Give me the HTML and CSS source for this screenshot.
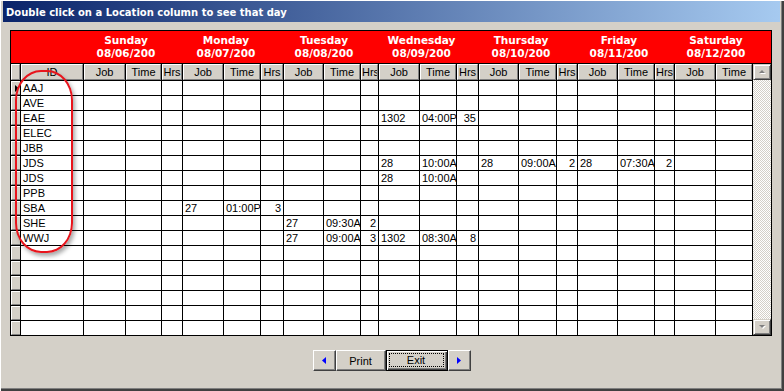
FILE: index.html
```html
<!DOCTYPE html>
<html>
<head>
<meta charset="utf-8">
<link rel="stylesheet" href="styles.css">
</head>
<body>
<div class="window">
  <div class="titlebar"><span class="title">Double click on a Location column to see that day</span></div>
  <div class="client">
    <div class="grid">
      <div class="days">
        <div class="days-lead"></div>
        <div class="day d-sun">Sunday<br>08/06/200</div>
        <div class="day d-mon">Monday<br>08/07/200</div>
        <div class="day d-tue">Tuesday<br>08/08/200</div>
        <div class="day d-wed">Wednesday<br>08/09/200</div>
        <div class="day d-thu">Thursday<br>08/10/200</div>
        <div class="day d-fri">Friday<br>08/11/200</div>
        <div class="day d-sat">Saturday<br>08/12/200</div>
      </div>
      <div class="grid-body">
        <div class="rows">
          <div class="row head"><span class="sel"></span><span>ID</span><span>Job</span><span>Time</span><span>Hrs</span><span>Job</span><span>Time</span><span>Hrs</span><span>Job</span><span>Time</span><span>Hrs</span><span>Job</span><span>Time</span><span>Hrs</span><span>Job</span><span>Time</span><span>Hrs</span><span>Job</span><span>Time</span><span>Hrs</span><span>Job</span><span>Time</span></div>
          <div class="row"><span class="sel"><svg class="ptr" width="4" height="7" viewBox="0 0 4 7"><path d="M0 0L4 3.5L0 7Z" fill="#000"/></svg></span><span>AAJ</span><span></span><span></span><span></span><span></span><span></span><span></span><span></span><span></span><span></span><span></span><span></span><span></span><span></span><span></span><span></span><span></span><span></span><span></span><span></span><span></span></div>
          <div class="row"><span class="sel"></span><span>AVE</span><span></span><span></span><span></span><span></span><span></span><span></span><span></span><span></span><span></span><span></span><span></span><span></span><span></span><span></span><span></span><span></span><span></span><span></span><span></span><span></span></div>
          <div class="row"><span class="sel"></span><span>EAE</span><span></span><span></span><span></span><span></span><span></span><span></span><span></span><span></span><span></span><span>1302</span><span class="tm">04:00P</span><span class="hrs">35</span><span></span><span></span><span></span><span></span><span></span><span></span><span></span><span></span></div>
          <div class="row"><span class="sel"></span><span>ELEC</span><span></span><span></span><span></span><span></span><span></span><span></span><span></span><span></span><span></span><span></span><span></span><span></span><span></span><span></span><span></span><span></span><span></span><span></span><span></span><span></span></div>
          <div class="row"><span class="sel"></span><span>JBB</span><span></span><span></span><span></span><span></span><span></span><span></span><span></span><span></span><span></span><span></span><span></span><span></span><span></span><span></span><span></span><span></span><span></span><span></span><span></span><span></span></div>
          <div class="row"><span class="sel"></span><span>JDS</span><span></span><span></span><span></span><span></span><span></span><span></span><span></span><span></span><span></span><span>28</span><span class="tm">10:00A</span><span class="hrs"></span><span>28</span><span class="tm">09:00A</span><span class="hrs">2</span><span>28</span><span class="tm">07:30A</span><span class="hrs">2</span><span></span><span></span></div>
          <div class="row"><span class="sel"></span><span>JDS</span><span></span><span></span><span></span><span></span><span></span><span></span><span></span><span></span><span></span><span>28</span><span class="tm">10:00A</span><span></span><span></span><span></span><span></span><span></span><span></span><span></span><span></span><span></span></div>
          <div class="row"><span class="sel"></span><span>PPB</span><span></span><span></span><span></span><span></span><span></span><span></span><span></span><span></span><span></span><span></span><span></span><span></span><span></span><span></span><span></span><span></span><span></span><span></span><span></span><span></span></div>
          <div class="row"><span class="sel"></span><span>SBA</span><span></span><span></span><span></span><span>27</span><span class="tm">01:00P</span><span class="hrs">3</span><span></span><span></span><span></span><span></span><span></span><span></span><span></span><span></span><span></span><span></span><span></span><span></span><span></span><span></span></div>
          <div class="row"><span class="sel"></span><span>SHE</span><span></span><span></span><span></span><span></span><span></span><span></span><span>27</span><span class="tm">09:30A</span><span class="hrs">2</span><span></span><span></span><span></span><span></span><span></span><span></span><span></span><span></span><span></span><span></span><span></span></div>
          <div class="row"><span class="sel"></span><span>WWJ</span><span></span><span></span><span></span><span></span><span></span><span></span><span>27</span><span class="tm">09:00A</span><span class="hrs">3</span><span>1302</span><span class="tm">08:30A</span><span class="hrs">8</span><span></span><span></span><span></span><span></span><span></span><span></span><span></span><span></span></div>
          <div class="row"><span class="sel"></span><span></span><span></span><span></span><span></span><span></span><span></span><span></span><span></span><span></span><span></span><span></span><span></span><span></span><span></span><span></span><span></span><span></span><span></span><span></span><span></span><span></span></div>
          <div class="row"><span class="sel"></span><span></span><span></span><span></span><span></span><span></span><span></span><span></span><span></span><span></span><span></span><span></span><span></span><span></span><span></span><span></span><span></span><span></span><span></span><span></span><span></span><span></span></div>
          <div class="row"><span class="sel"></span><span></span><span></span><span></span><span></span><span></span><span></span><span></span><span></span><span></span><span></span><span></span><span></span><span></span><span></span><span></span><span></span><span></span><span></span><span></span><span></span><span></span></div>
          <div class="row"><span class="sel"></span><span></span><span></span><span></span><span></span><span></span><span></span><span></span><span></span><span></span><span></span><span></span><span></span><span></span><span></span><span></span><span></span><span></span><span></span><span></span><span></span><span></span></div>
          <div class="row"><span class="sel"></span><span></span><span></span><span></span><span></span><span></span><span></span><span></span><span></span><span></span><span></span><span></span><span></span><span></span><span></span><span></span><span></span><span></span><span></span><span></span><span></span><span></span></div>
          <div class="row"><span class="sel"></span><span></span><span></span><span></span><span></span><span></span><span></span><span></span><span></span><span></span><span></span><span></span><span></span><span></span><span></span><span></span><span></span><span></span><span></span><span></span><span></span><span></span></div>
        </div>
        <div class="vscroll">
          <div class="sb-btn"><svg width="9" height="6" viewBox="0 0 9 6"><path d="M2 5L5 2L8 5Z" fill="#fff"/><path d="M1 4L4 1L7 4Z" fill="#808080"/></svg></div>
          <div class="sb-track"></div>
          <div class="sb-btn"><svg width="9" height="6" viewBox="0 0 9 6"><path d="M2 2L5 5L8 2Z" fill="#fff"/><path d="M1 1L4 4L7 1Z" fill="#808080"/></svg></div>
        </div>
      </div>
    </div>
    <div class="buttons">
      <button class="btn btn-arrow"><svg width="4" height="7" viewBox="0 0 4 7"><path d="M4 0L0 3.5L4 7Z" fill="#0000ff"/></svg></button>
      <button class="btn btn-print">Print</button>
      <button class="btn btn-exit"><span class="focus">Exit</span></button>
      <button class="btn btn-arrow"><svg width="4" height="7" viewBox="0 0 4 7"><path d="M0 0L4 3.5L0 7Z" fill="#0000ff"/></svg></button>
    </div>
  </div>
  <div class="annot"></div>
</div>
</body>
</html>
```
FILE: styles.css
```css
* { box-sizing: border-box; }
html, body { margin: 0; padding: 0; }
body {
  background: #d4d0c8;
  font-family: "Liberation Sans", Arial, sans-serif;
  font-size: 11px;
  color: #000;
}
.window {
  position: relative;
  width: 784px;
  height: 391px;
  background: #d4d0c8;
  padding: 1px 4px 0 3px;
  box-shadow: inset 1px 1px 0 #ffffff, inset -1px -1px 0 #404040, inset -2px -2px 0 #404040, inset -3px -3px 0 #808080;
}
.titlebar {
  height: 21px;
  background: linear-gradient(to right, #0a246a, #a6caf0);
  padding: 4px 0 0 3px;
}
.title {
  display: block;
  font-family: "DejaVu Sans", Verdana, sans-serif;
  font-weight: bold;
  font-size: 10px;
  line-height: 16px;
  color: #fff;
  white-space: nowrap;
}
.client {
  padding: 8px 0 0 7px;
}
.grid {
  width: 762px;
  height: 306px;
  border: 1px solid #000;
  background: #d4d0c8;
}
.days {
  display: flex;
  height: 33px;
  background: #ff0000;
  border-bottom: 1px solid #000;
  color: #fff;
  font-family: "DejaVu Sans", Verdana, sans-serif;
  font-weight: bold;
  font-size: 10.5px;
  line-height: 13px;
}
.days-lead { width: 72px; flex: none; }
.day {
  flex: none;
  text-align: center;
  padding: 3px 13px 0 0;
  white-space: nowrap;
}
.d-sun { width: 99px; }
.d-mon { width: 101px; }
.d-tue { width: 95px; }
.d-wed { width: 100px; }
.d-thu { width: 99px; }
.d-fri { width: 97px; }
.d-sat { width: 97px; }
.grid-body {
  display: flex;
  height: 271px;
}
.rows {
  width: 742px;
  flex: none;
  display: flex;
  flex-direction: column;
  gap: 1px;
  background: #000;
  padding-right: 1px;
}
.row {
  display: grid;
  grid-template-columns: 9px 62px 41px 35px 20px 40px 36px 22px 39px 36px 17px 40px 36px 21px 39px 37px 20px 39px 36px 19px 40px 36px;
  column-gap: 1px;
  height: 14px;
  line-height: 14px;
}
.row > span {
  background: #fff;
  padding: 0 2px;
  overflow: hidden;
  white-space: nowrap;
}
.row > span.tm { padding: 0 0 0 2px; }
.row > span.hrs { text-align: right; }
.row > span.sel {
  background: #d4d0c8;
  padding: 0;
  border-top: 1px solid #fff;
  border-left: 1px solid #fff;
  border-bottom: 1px solid #808080;
  display: flex;
  align-items: center;
  justify-content: center;
}
.ptr { display: block; margin-left: 2px; }
.row.head { height: 16px; line-height: 14px; }
.row.head > span {
  background: #d4d0c8;
  text-align: center;
  border-top: 1px solid #fff;
  border-left: 1px solid #fff;
  border-bottom: 1px solid #808080;
  border-right: 1px solid #808080;
  padding: 0;
}
.vscroll {
  width: 18px;
  flex: none;
  display: flex;
  flex-direction: column;
}
.sb-track {
  flex: 1;
  background-color: #fff;
  background-image: conic-gradient(#d4d0c8 25%, #fff 0 50%, #d4d0c8 0 75%, #fff 0);
  background-size: 2px 2px;
}
.sb-btn {
  height: 16px;
  background: #d4d0c8;
  border: 1px solid;
  border-color: #d4d0c8 #404040 #404040 #d4d0c8;
  box-shadow: inset 1px 1px 0 #fff, inset -1px -1px 0 #808080;
  display: flex;
  align-items: center;
  justify-content: center;
}
.sb-btn svg { display: block; }
.buttons {
  display: flex;
  justify-content: center;
  margin: 14px 0 0 -7px;
}
.btn {
  height: 21px;
  margin: 0;
  padding: 0;
  background: #d4d0c8;
  font-family: "Liberation Sans", Arial, sans-serif;
  font-size: 11px;
  color: #000;
  border: 1px solid;
  border-color: #fff #404040 #404040 #fff;
  box-shadow: inset -1px -1px 0 #808080;
  display: flex;
  align-items: center;
  justify-content: center;
}
.btn svg { display: block; }
.btn-arrow { width: 23px; }
.btn-print { width: 50px; }
.btn-exit {
  width: 62px;
  border-color: #000;
  box-shadow: inset 1px 1px 0 #fff, inset -1px -1px 0 #404040, inset -2px -2px 0 #808080;
  padding: 2px 3px 3px 2px;
}
.focus {
  flex: 1;
  align-self: stretch;
  border: 1px dotted #000;
  display: flex;
  align-items: center;
  justify-content: center;
}
.annot {
  position: absolute;
  left: 15px;
  top: 70px;
  width: 58px;
  height: 183px;
  border: 2px solid #e8141c;
  border-radius: 26px / 30px;
  box-shadow: 2px 3px 4px rgba(0, 0, 0, 0.35);
}
```
